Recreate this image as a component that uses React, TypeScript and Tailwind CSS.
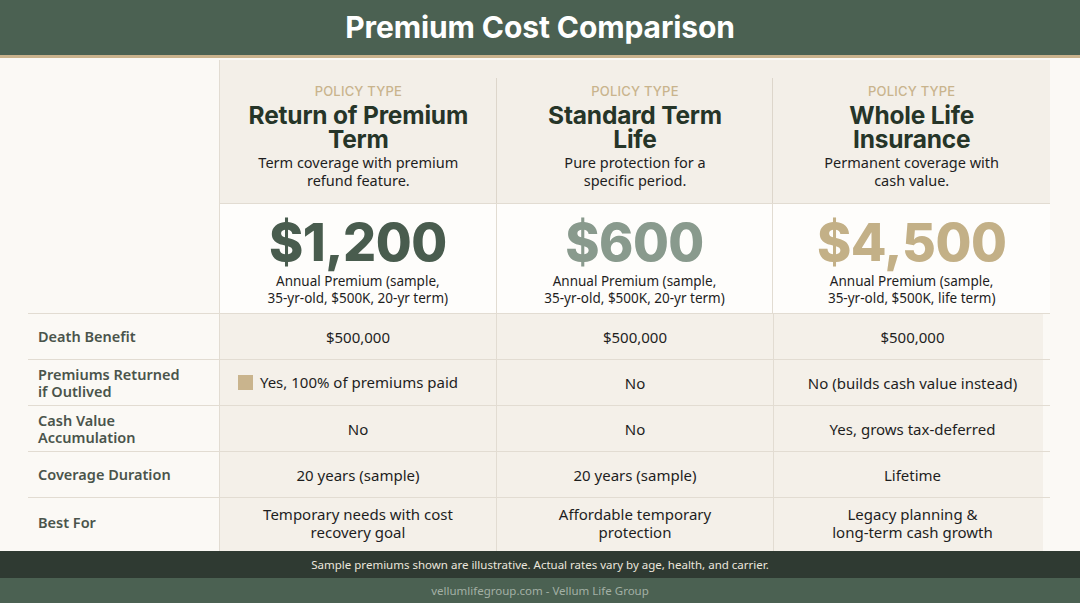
import React from "react";

const cols = [
  {
    title: ["Return of Premium", "Term"],
    desc: ["Term coverage with premium", "refund feature."],
    price: "$1,200",
    priceColor: "text-[#495c4e]",
    sub: ["Annual Premium (sample,", "35-yr-old, $500K, 20-yr term)"],
  },
  {
    title: ["Standard Term", "Life"],
    desc: ["Pure protection for a", "specific period."],
    price: "$600",
    priceColor: "text-[#899a8d]",
    sub: ["Annual Premium (sample,", "35-yr-old, $500K, 20-yr term)"],
  },
  {
    title: ["Whole Life", "Insurance"],
    desc: ["Permanent coverage with", "cash value."],
    price: "$4,500",
    priceColor: "text-[#c3b087]",
    sub: ["Annual Premium (sample,", "35-yr-old, $500K, life term)"],
  },
];

const rows: { label: string[]; cells: string[][]; h: string }[] = [
  { label: ["Death Benefit"], cells: [["$500,000"], ["$500,000"], ["$500,000"]], h: "h-[46px]" },
  {
    label: ["Premiums Returned", "if Outlived"],
    cells: [["__gold__"], ["No"], ["No (builds cash value instead)"]],
    h: "h-[46px]",
  },
  {
    label: ["Cash Value", "Accumulation"],
    cells: [["No"], ["No"], ["Yes, grows tax-deferred"]],
    h: "h-[46px]",
  },
  {
    label: ["Coverage Duration"],
    cells: [["20 years (sample)"], ["20 years (sample)"], ["Lifetime"]],
    h: "h-[46px]",
  },
  {
    label: ["Best For"],
    cells: [
      ["Temporary needs with cost", "recovery goal"],
      ["Affordable temporary", "protection"],
      ["Legacy planning &", "long-term cash growth"],
    ],
    h: "h-[54px] pb-[4px]",
  },
];

const body = { fontFamily: '"Noto Sans", "Open Sans", sans-serif' };
const head = { fontFamily: 'Inter, "Noto Sans", sans-serif' };

function Lines({ lines }: { lines: string[] }) {
  return (
    <div className="text-[15px] text-[#1e1e1e] leading-[18px] text-center">
      {lines.map((t, k) => (
        <div key={k}>{t}</div>
      ))}
    </div>
  );
}

export default function App() {
  return (
    <div className="w-[1080px] h-[603px] overflow-hidden bg-[#fbf9f5] flex flex-col" style={body}>
      <div className="h-[55px] bg-[#4b6152] flex items-center justify-center shrink-0">
        <h1 className="text-white text-[30px] font-bold tracking-[-0.1px]" style={head}>
          Premium Cost Comparison
        </h1>
      </div>
      <div className="h-[3px] bg-[#c9b28c] shrink-0" />
      <div className="h-[2px] shrink-0" />
      {/* header block */}
      <div className="flex shrink-0">
        <div className="w-[219px]" />
        <div className="flex w-[831px] border-l border-[#e2dcd2]">
          {cols.map((c, i) => (
            <div key={i} className="flex-1 flex flex-col">
              <div className="h-[143px] bg-[#f3efe8] pt-[18px] flex">
                <div className="h-[125px] w-full flex flex-col items-center relative pt-[2px]">
                  <div
                    className="text-[13px] font-medium text-[#c9b48d] leading-[22px] tracking-[0.2px]"
                    style={head}
                  >
                    POLICY TYPE
                  </div>
                  <div
                    className="text-[24.5px] font-bold text-[#263528] leading-[24px] text-center tracking-[-0.2px] mt-[1px]"
                    style={head}
                  >
                    <div>{c.title[0]}</div>
                    <div>{c.title[1]}</div>
                  </div>
                  <div className="text-[14.5px] text-[#1e1e1e] leading-[18px] text-center mt-[2px]">
                    {c.desc[0]}
                    <br />
                    {c.desc[1]}
                  </div>
                  {i < 2 && <div className="absolute right-0 top-0 bottom-0 w-px bg-[#ddd6cb]" />}
                </div>
              </div>
              <div
                className={`h-[110px] bg-[#fefdfb] border-t border-[#e2dcd2] flex flex-col items-center pt-[8px] ${
                  i < 2 ? "border-r" : ""
                }`}
              >
                <div
                  className={`text-[52px] font-extrabold leading-[62px] tracking-[-0.5px] ${c.priceColor}`}
                  style={head}
                >
                  {c.price}
                </div>
                <div className="text-[13.5px] text-[#1e1e1e] leading-[17px] text-center -mt-[1px]">
                  {c.sub[0]}
                  <br />
                  {c.sub[1]}
                </div>
              </div>
            </div>
          ))}
        </div>
      </div>
      {/* data rows */}
      <div className="flex flex-col shrink-0">
        {rows.map((r, ri) => (
          <div key={ri} className={`flex ${r.h.split(" ")[0]}`}>
            <div className="w-[219px] flex items-center">
              <div
                className={`ml-[28px] flex-1 h-full flex items-center pl-[10px] border-t border-[#e2dcd2] ${
                  ri === 4 ? "pb-[4px]" : ""
                }`}
              >
                <div className="text-[14.5px] font-semibold text-[#4a544b] leading-[17px]">
                  {r.label.map((l, k) => (
                    <div key={k}>{l}</div>
                  ))}
                </div>
              </div>
            </div>
            <div className="flex w-[831px] border-l border-[#e2dcd2]">
              {r.cells.map((cell, ci) => (
                <div
                  key={ci}
                  className={`flex-1 h-full border-t border-[#e2dcd2] flex items-center justify-center ${
                    ci < 2 ? "border-r bg-[#f4f0e9]" : ""
                  } ${ri === 4 && ci < 2 ? "pb-[4px]" : ""}`}
                >
                  {ci === 2 ? (
                    <div className="flex w-full h-full">
                      <div
                        className={`w-[269px] h-full bg-[#f4f0e9] flex items-center justify-center pl-[8px] ${
                          ri === 4 ? "pb-[4px]" : ""
                        }`}
                      >
                        <Lines lines={cell} />
                      </div>
                    </div>
                  ) : cell[0] === "__gold__" ? (
                    <div className="flex items-center gap-[7px] text-[15px] text-[#1e1e1e] pr-[20px]">
                      <span className="inline-block w-[15px] h-[15px] bg-[#c9b48d]" />
                      Yes, 100% of premiums paid
                    </div>
                  ) : (
                    <Lines lines={cell} />
                  )}
                </div>
              ))}
            </div>
          </div>
        ))}
      </div>
      <div className="h-[27px] bg-[#2f3a32] flex items-center justify-center shrink-0">
        <span className="text-[11.5px] text-[#ebe6dd]">
          Sample premiums shown are illustrative. Actual rates vary by age, health, and carrier.
        </span>
      </div>
      <div className="flex-1 bg-[#4b6152] flex items-center justify-center">
        <span className="text-[11.5px] text-[#a3b0a5]">vellumlifegroup.com - Vellum Life Group</span>
      </div>
    </div>
  );
}
